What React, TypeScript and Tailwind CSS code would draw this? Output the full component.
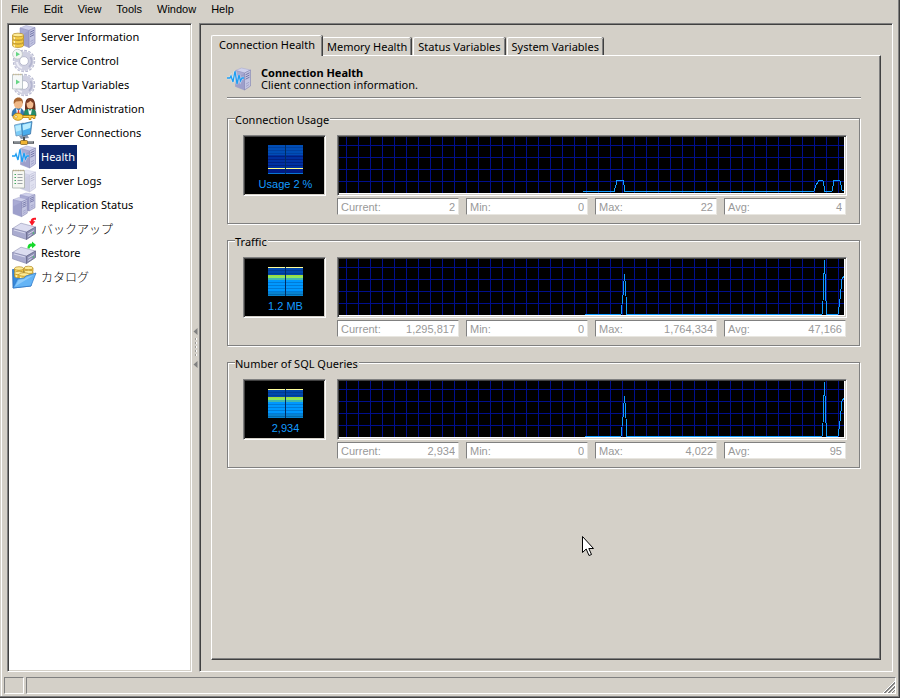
import { useState, type ReactNode } from "react"

const sunken =
  "border border-t-[#808080] border-l-[#808080] border-r-white border-b-white p-px shadow-[inset_1px_1px_0_#404040,inset_-1px_-1px_0_#d4d0c8]"

const menus = ["File", "Edit", "View", "Tools", "Window", "Help"]

function Tower({ x = 0, y = 0, faded = false }: { x?: number; y?: number; faded?: boolean }) {
  return (
    <g transform={`translate(${x} ${y})`} opacity={faded ? 0.5 : 1}>
      <path d="M0 2.5 6 0 15 2 9 5Z" fill="#cfd1ec" stroke="#a3a5cd" strokeWidth=".5" />
      <path d="M0 2.5 9 5V22L0 18.500Z" fill="#a9abd4" stroke="#8f91bf" strokeWidth=".5" />
      <path d="M9 5 15 2V18L9 22Z" fill="#c3c5e2" stroke="#7f81b0" strokeWidth=".6" />
      <path d="M.5 10 8.500 5.500V21.500L.5 18Z" fill="#8f91c2" opacity=".45" />
      <path d="M10 6.800 14 4.800M10 9 14 7M10 11.200 14 9.200" stroke="#7476a8" strokeWidth="1" />
      <path d="M10.500 16 13.500 14.300M10.500 18.500 13.500 16.500" stroke="#9496c2" strokeWidth=".7" />
    </g>
  )
}

function Gear() {
  return (
    <g fill="none">
      <circle cx="12" cy="12" r="9.800" stroke="#a9abc6" strokeWidth="2.800" strokeDasharray="2.400 1.448" />
      <circle cx="12" cy="12" r="9.600" stroke="#d9dae8" strokeWidth="2" strokeDasharray="2.200 1.570" />
      <circle cx="12" cy="12" r="7" stroke="#cfd0e1" strokeWidth="5" />
      <circle cx="12" cy="12" r="4.400" stroke="#a4a6c0" strokeWidth=".7" />
      <path d="M18.500 8a8 8 0 0 1-1.500 10" stroke="#b3b5cf" strokeWidth="2" />
      <path d="M5 13a7 7 0 0 0 5 6" stroke="#efeff7" strokeWidth="2" />
    </g>
  )
}

function Disk({ x, y, w = 11 }: { x: number; y: number; w?: number }) {
  return (
    <g transform={`translate(${x} ${y})`} stroke="#b58a20" strokeWidth=".7">
      <path d={`M0 2v3c0 2.600 ${w} 2.600 ${w} 0V2`} fill="#f4cb45" />
      <ellipse cx={w / 2} cy="2" rx={w / 2} ry="1.800" fill="#fdeb96" />
      <path d="M1.800 4.200v2" stroke="#fff7cb" strokeWidth="1.200" />
    </g>
  )
}

function Drive() {
  return (
    <g>
      <path d="M.5 11.500 9 6.200 23.500 10 14.500 15.200Z" fill="#dcddf0" stroke="#9092b3" strokeWidth=".6" />
      <path d="M.5 11.500 14.500 15.200V22.500L.5 17.800Z" fill="#a9abcf" stroke="#7f81a8" strokeWidth=".6" />
      <path d="M14.500 15.200 23.500 10V16.500L14.500 22.500Z" fill="#8d8fb4" stroke="#606284" strokeWidth=".7" />
      <path d="M2 13 13 16" stroke="#d9daee" strokeWidth="1" />
      <path d="M16.200 17 21.800 13.600M16.200 19.500 19.500 17.500" stroke="#e2e3f2" strokeWidth=".9" />
      <circle cx="21.500" cy="16" r=".7" fill="#39d353" />
    </g>
  )
}

const icons: Record<string, ReactNode> = {
  info: (
    <>
      <Tower x={8} y={0.5} />
      <Disk x={0.5} y={15.5} />
      <Disk x={0.5} y={11.8} />
      <Disk x={0.5} y={8} />
    </>
  ),
  service: (
    <>
      <Gear />
      <circle cx="5.500" cy="5.200" r="4.900" fill="#f4f6f4" stroke="#bcc2c4" strokeWidth=".8" />
      <path d="M4 2.800 8 5.200 4 7.600Z" fill="#66d685" />
    </>
  ),
  startup: (
    <>
      <Gear />
      <path d="M.5 1.500H10.500V16H.5Z" fill="#f5f8f8" stroke="#afb9bd" strokeWidth=".8" />
      <path d="M1 1.500H10" stroke="#c9b991" strokeWidth="1.600" strokeDasharray="1 .7" />
      <path d="M4 6.500 8 9 4 11.500Z" fill="#66d685" />
    </>
  ),
  users: (
    <>
      <path d="M0 19c0-6 2-8 6-8s6 2 6 8Z" fill="#3478b7" stroke="#205583" strokeWidth=".6" />
      <path d="M12 19c0-6 2-8 6-8s6 2 6 8Z" fill="#238d69" stroke="#11543e" strokeWidth=".6" />
      <path d="M13 13c0-8 .5-12 5-12s5.500 4 5.500 12l-3-1h-5Z" fill="#69301c" />
      <ellipse cx="6.300" cy="6.700" rx="4.400" ry="5" fill="#f0b987" />
      <ellipse cx="18" cy="7" rx="3.400" ry="4.500" fill="#f4bd91" />
      <path d="M1.800 7C1.200 2.800 3.300.6 6.500.6S11.500 3 10.800 7L9.500 4 4 4.500Z" fill="#a96631" />
      <path d="M14.600 6c1.500 0 3-1.200 3.700-2.300l3.100 2.600V3L18 1.500l-3 2Z" fill="#7e3d24" />
      <path d="m4 11 2.500 3L9 11l-1 7H5ZM16 11.500l2 2.500 2-2.500-1 6h-2Z" fill="#fff" />
      <path d="m6 13-1 5h3l-1-5Z" fill="#d84940" />
      <path d="M9 18.500h14v3h-2v-1h-2v2h-2v-2H9" fill="#ffd34b" stroke="#b77b09" strokeWidth=".8" />
      <ellipse cx="6" cy="19.800" rx="5" ry="3.500" fill="#ffd34b" stroke="#b77b09" strokeWidth=".8" />
      <circle cx="4" cy="19.800" r="1.300" fill="#fff6d0" stroke="#b77b09" strokeWidth=".5" />
    </>
  ),
  connections: (
    <>
      <path d="m7 15 8-2 2 4-8 1Z" fill="#8796ad" />
      <path d="m2.500 4 9-2v11.500l-7.500 1.500Z" fill="#7cccf7" stroke="#5d8db8" strokeWidth=".7" />
      <path d="m9.500 3 10.500-2.500-1.500 12.500-8 2Z" fill="#49acec" stroke="#3f75a5" strokeWidth=".8" />
      <path d="m10.500 3.800 8.500-2-.8 5.200-7.200 2.500ZM3.300 5 9 3.700v5.500l-5 1.500Z" fill="#b9ecff" />
      <path d="M12 16v4" stroke="#4e5458" strokeWidth="2" />
      <path d="M1 21.500h21" stroke="#4b5057" strokeWidth="2.500" />
      <path d="M2 21h19" stroke="#b9bfc3" strokeWidth="1" />
      <rect x="8.500" y="19.500" width="7" height="4" rx="1" fill="#f0b534" stroke="#795818" strokeWidth=".7" />
    </>
  ),
  health: (
    <>
      <Tower x={8.5} y={1} />
      <path d="M0 11h3l1-2 2 6L8 4l2 13 2-9 1.500 6 1.500-3h2" fill="none" stroke="#e8f6ff" strokeWidth="2.500" opacity=".6" />
      <path d="M0 11h3l1-2 2 6L8 4l2 13 2-9 1.500 6 1.500-3h2" fill="none" stroke="#1d9df2" strokeWidth="1.300" />
    </>
  ),
  logs: (
    <>
      <Tower x={8.5} y={1} faded />
      <path d="M.5 1.500h12V19H.5Z" fill="#f6f7f2" stroke="#a7aea8" strokeWidth=".8" />
      <path d="M1 1.500h11" stroke="#b9a87f" strokeWidth="1.600" strokeDasharray="1 .7" />
      <path d="M2.500 5.500H4m-1.500 3H4m-1.500 3H4m-1.500 3H4" stroke="#43a862" strokeWidth="1.200" />
      <path d="M5.500 5.500h5m-5 3h5m-5 3h5m-5 3h5" stroke="#949b9f" strokeWidth=".9" />
    </>
  ),
  replication: (
    <>
      <g transform="translate(7 0) scale(1 .82)">
        <Tower x={1} />
      </g>
      <g transform="translate(1 4.500) scale(.95 .87)">
        <Tower />
      </g>
    </>
  ),
  backup: (
    <>
      <Drive />
      <path d="M24 .8c-3.500-.5-5.300.8-5.300 3.400H17l3 4.600 3.300-4.600h-1.800c0-1.200.8-1.600 2.500-1.300Z" fill="#fb1725" />
    </>
  ),
  restore: (
    <>
      <Drive />
      <path d="M15.500 7.500C15.500 3.600 17.500 2.400 20 2.600V.5l4 3.600-4 3.300V5.500c-1.500-.2-2.200.5-2.200 2Z" fill="#16d92c" />
    </>
  ),
  catalog: (
    <>
      <path d="M1 23 .5 4.500h4L6 6h13v15Z" fill="#3689dc" stroke="#2262ad" strokeWidth=".7" />
      <Disk x={2.5} y={1.5} w={9} />
      <Disk x={12} y={1} w={9} />
      <Disk x={2.5} y={6} w={9} />
      <Disk x={12} y={5} w={9} />
      <Disk x={7} y={7.5} w={10} />
      <path d="M1 23 5.500 14l6.500-1 2-2 10-3-5 13Z" fill="#64b4f6" stroke="#2d76c5" strokeWidth=".7" />
      <path d="m3 21.500 3.500-6.500 6-1 2.500-2 7-2Z" fill="#a6daff" opacity=".6" />
    </>
  ),
}

function Icon({ name }: { name: string }) {
  return (
    <svg className="size-6 shrink-0 overflow-visible" viewBox="0 0 24 24" aria-hidden="true">
      {icons[name]}
    </svg>
  )
}

const sections = [
  { icon: "info", label: "Server Information" },
  { icon: "service", label: "Service Control" },
  { icon: "startup", label: "Startup Variables" },
  { icon: "users", label: "User Administration" },
  { icon: "connections", label: "Server Connections" },
  { icon: "health", label: "Health" },
  { icon: "logs", label: "Server Logs" },
  { icon: "replication", label: "Replication Status" },
  { icon: "backup", label: "バックアップ" },
  { icon: "restore", label: "Restore" },
  { icon: "catalog", label: "カタログ" },
]

const tabs = ["Connection Health", "Memory Health", "Status Variables", "System Variables"]

interface Graph {
  id: string
  title: string
  caption: string
  full: boolean
  line: string
  stats: [string, string][]
}

const burstLine =
  "M246 55.5H282L284 36L285.5 15L286.5 28L288 55.5H483L484 42L485.5 1L487 42L488 55.5H499L501 40L503 20L505 17"

const graphs: Graph[] = [
  {
    id: "usage",
    title: "Connection Usage",
    caption: "Usage 2 %",
    full: false,
    line: "M244 54.5H275L277 48L278 43.5H284L285 48L286 54.5H475L477 48L480 43.5H484L486 54.5H493L495 43.5H501L503 53H505",
    stats: [["Current:", "2"], ["Min:", "0"], ["Max:", "22"], ["Avg:", "4"]],
  },
  {
    id: "traffic",
    title: "Traffic",
    caption: "1.2 MB",
    full: true,
    line: burstLine,
    stats: [["Current:", "1,295,817"], ["Min:", "0"], ["Max:", "1,764,334"], ["Avg:", "47,166"]],
  },
  {
    id: "queries",
    title: "Number of SQL Queries",
    caption: "2,934",
    full: true,
    line: burstLine,
    stats: [["Current:", "2,934"], ["Min:", "0"], ["Max:", "4,022"], ["Avg:", "95"]],
  },
]

function gaugeColor(row: number, full: boolean) {
  if (full) {
    if (row === 0) return "#ffff9c"
    if (row < 8) return row % 3 === 0 ? "#003c94" : "#0048ad"
    if (row < 11) return row === 8 ? "#a5d838" : "#8ce65a"
    if (row < 13) return "#42b6b0"
    if (row > 24) return row % 3 === 0 ? "#006bb0" : "#0782d0"
    return row % 3 === 0 ? "#007bd8" : "#0098ff"
  }
  if (row === 23) return "#ffff84"
  if (row === 28) return "#0875d4"
  if (row > 23) return "#001b86"
  if (row < 10) return row % 3 === 2 ? "#0040a0" : "#004db5"
  return row % 3 === 2 ? "#002080" : "#0030a0"
}

function Gauge({ full, caption }: { full: boolean; caption: string }) {
  return (
    <div className={`${sunken} h-[61px] w-[83px] shrink-0 bg-black`}>
      <div className="flex flex-col items-center pt-2 pl-0.5">
        <svg width="35" height="29" viewBox="0 0 35 29" shapeRendering="crispEdges" aria-hidden="true">
          {Array.from({ length: 29 }, (_, i) => (
            <rect key={i} y={i} width="35" height="1" fill={gaugeColor(i, full)} />
          ))}
          <rect x="17" width="1" height="29" fill="#002c62" />
        </svg>
        <span className="mt-0.5 font-['Liberation_Sans',sans-serif] text-[11px] leading-4 text-[#149cff]">
          {caption}
        </span>
      </div>
    </div>
  )
}

function GraphGroup({ id, title, caption, full, line, stats }: Graph) {
  return (
    <section className="mr-px border border-[#808080] px-[15px] pb-2 shadow-[1px_1px_0_#fff,inset_1px_1px_0_#fff]">
      <h2 className="-mt-[7px] -ml-2 w-fit bg-[#d4d0c8] pr-px leading-4">{title}</h2>
      <div className="mt-[7px] flex gap-[11px]">
        <Gauge full={full} caption={caption} />
        <div className="-mr-[3px] min-w-0 flex-1">
          <div className={`${sunken} h-[61px] bg-white`}>
            <div className="mr-px h-14 bg-black">
              <svg className="block size-full" shapeRendering="crispEdges" role="img" aria-label={title}>
                <defs>
                  <pattern id={id} width="12" height="12" patternUnits="userSpaceOnUse" x="7" y="8">
                    <path d="M0 .5H12M.5 0V12" stroke="#000f8c" />
                  </pattern>
                </defs>
                <rect width="100%" height="100%" fill={`url(#${id})`} />
                <svg width="100%" height="100%" viewBox="0 0 505 56" preserveAspectRatio="none">
                  <path d={line} fill="none" stroke="#109cff" />
                </svg>
              </svg>
            </div>
          </div>
          <div className="mt-0.5 mr-px grid grid-cols-4 gap-[7px] font-['Liberation_Sans',sans-serif] text-[11px] text-[#999]">
            {stats.map(([name, value]) => (
              <div
                key={name}
                className="flex h-[17px] items-center border border-t-[#808080] border-r-[#e8e6e0] border-b-[#e8e6e0] border-l-[#808080] bg-white px-[3px] pt-px leading-[14px]"
              >
                <label htmlFor={`${id}-${name}`}>{name}</label>
                <input
                  id={`${id}-${name}`}
                  className="h-[14px] min-w-0 flex-1 text-right"
                  value={value}
                  disabled
                  readOnly
                />
              </div>
            ))}
          </div>
        </div>
      </div>
    </section>
  )
}

function Sidebar() {
  const [selected, setSelected] = useState("health")

  return (
    <nav className={`${sunken} w-[185px] shrink-0 bg-white`}>
      {sections.map(({ icon, label }) => (
        <button key={icon} className="flex h-6 w-full items-center gap-[3px] pl-[3px]" onClick={() => setSelected(icon)}>
          <Icon name={icon} />
          <span
            className={`flex h-6 items-center px-0.5 ${icon === selected ? "bg-[#0a246a] text-white" : ""} ${
              /^[ァ-ヶー]/.test(label) ? "font-['Noto_Sans_CJK_JP',sans-serif] text-[12px] font-light" : ""
            }`}
          >
            {label}
          </span>
        </button>
      ))}
    </nav>
  )
}

function Splitter() {
  return (
    <div className="flex w-[7px] shrink-0 items-center justify-center" role="separator">
      <svg width="5" height="42" viewBox="0 0 5 42">
        <path d="M4.500 1V8L.5 4.500ZM4.500 34V41L.5 37.500Z" fill="#808080" />
        <path d="M3 11V31" stroke="#fff" strokeWidth="2" strokeDasharray="2 2" />
        <path d="M2.500 11V31" stroke="#9a9893" strokeDasharray="2 2" />
      </svg>
    </div>
  )
}

function Tabs() {
  const [active, setActive] = useState(tabs[0])

  return (
    <div className="flex items-end" role="tablist">
      {tabs.map((tab) => (
        <button
          key={tab}
          role="tab"
          aria-selected={tab === active}
          onClick={() => setActive(tab)}
          className={`rounded-t-[2px] border-t border-l border-t-white border-l-white bg-[#d4d0c8] whitespace-nowrap shadow-[inset_-1px_0_0_#808080,1px_0_0_#404040] ${
            tab === active ? "relative -mb-px h-[21px] px-[7px] pb-0.5" : "mr-0.5 h-[18px] px-1"
          }`}
        >
          {tab}
        </button>
      ))}
    </div>
  )
}

export default function App() {
  return (
    <div className="relative flex min-h-screen flex-col border-r border-b border-[#404040] bg-[#d4d0c8] font-['Noto_Sans','Noto_Sans_CJK_JP',sans-serif] text-[11px] leading-3 text-black shadow-[inset_-1px_-1px_0_#808080,inset_1px_0_0_#d4d0c8,inset_2px_0_0_#fff]">
      <header className="flex h-[23px] gap-[15px] pt-px pl-[11px] font-['Liberation_Sans',sans-serif] leading-4">
        {menus.map((menu) => (
          <button key={menu} className="h-4">
            {menu}
          </button>
        ))}
      </header>

      <div className="flex flex-1 pr-1.5 pl-[7px]">
        <Sidebar />
        <Splitter />
        <main className="flex min-w-0 flex-1 flex-col border border-t-[#808080] border-r-white border-b-white border-l-[#808080] p-[11px] shadow-[inset_1px_1px_0_#404040]">
          <Tabs />
          <div className="flex-1 border border-t-white border-r-[#404040] border-b-[#404040] border-l-white pt-[11px] pr-[19px] pl-[15px] shadow-[inset_-1px_-1px_0_#808080]">
            <div className="flex items-start gap-[10px] border-b border-[#808080] pb-1.5 shadow-[0_1px_0_#fff]">
              <Icon name="health" />
              <div>
                <h1 className="font-bold">Connection Health</h1>
                <p>Client connection information.</p>
              </div>
            </div>
            <div className="mt-5 flex flex-col gap-4">
              {graphs.map((graph) => (
                <GraphGroup key={graph.id} {...graph} />
              ))}
            </div>
          </div>
        </main>
      </div>

      <footer className="mt-[5px] mb-[3px] flex h-[17px] gap-0.5 pr-[3px] pl-1">
        <div className="w-5 border border-t-[#808080] border-r-white border-b-white border-l-[#808080]" />
        <div className="flex flex-1 items-end justify-end border border-t-[#808080] border-r-white border-b-white border-l-[#808080]">
          <svg width="12" height="12" viewBox="0 0 12 12">
            <path d="M0 12 12 0M4 12 12 4M8 12 12 8" stroke="#fff" />
            <path d="M1 12 12 1M2 12 12 2M5 12 12 5M6 12 12 6M9 12 12 9" stroke="#808080" />
          </svg>
        </div>
      </footer>

      <svg className="pointer-events-none absolute top-[536px] left-[582px]" width="12" height="21" viewBox="0 0 12 21">
        <path d="M.5.5V16.500L4.200 13 7 19.500 9.500 18.500 6.800 12.500H11.500Z" fill="#fff" stroke="#000" />
      </svg>
    </div>
  )
}
